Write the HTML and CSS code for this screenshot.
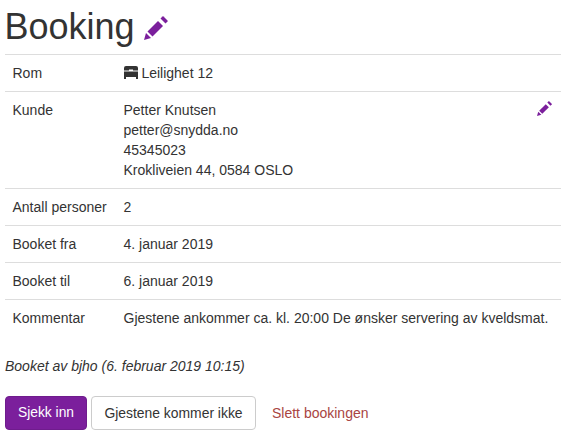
FILE: index.html
```html
<!DOCTYPE html>
<html lang="no">
<head>
<meta charset="utf-8">
<title>Booking</title>
<link rel="stylesheet" href="styles.css">
</head>
<body>
<svg class="defs" width="0" height="0" aria-hidden="true">
  <symbol id="pencil" viewBox="0 0 24 24">
    <path d="M0 24 L2 17 L7 22 Z"/>
    <path d="M3.5 15.5 L14 5 L19 10 L8.5 20.5 Z"/>
    <path d="M16.5 2.5 L18.5 .5 Q19 0 19.5 .5 L23.5 4.5 Q24 5 23.5 5.5 L21.5 7.5 Z"/>
  </symbol>
  <symbol id="bed" viewBox="0 0 14 14">
    <path d="M2 0 H12 Q14 0 14 2 V4.5 H9 V3.5 H5 V4.5 H0 V2 Q0 0 2 0 Z"/>
    <path d="M0 5.5 H14 V11 H0 Z"/>
    <path d="M0 11 H2 V13 H0 Z M12 11 H14 V13 H12 Z"/>
  </symbol>
</svg>
<h1 class="title">Booking <svg class="icon-title"><use href="#pencil"/></svg></h1>
<table class="details">
  <tbody>
    <tr><th>Rom</th><td><svg class="icon-bed"><use href="#bed"/></svg> Leilighet 12</td></tr>
    <tr>
      <th>Kunde</th>
      <td>
        <div class="customer">
          <div>Petter Knutsen<br>petter@snydda.no<br>45345023<br>Krokliveien 44, 0584 OSLO</div>
          <svg class="icon-edit"><use href="#pencil"/></svg>
        </div>
      </td>
    </tr>
    <tr><th>Antall personer</th><td>2</td></tr>
    <tr><th>Booket fra</th><td>4. januar 2019</td></tr>
    <tr><th>Booket til</th><td>6. januar 2019</td></tr>
    <tr><th>Kommentar</th><td>Gjestene ankommer ca. kl. 20:00 De ønsker servering av kveldsmat.</td></tr>
  </tbody>
</table>
<p class="meta">Booket av bjho (6. februar 2019 10:15)</p>
<div class="actions">
  <button class="btn btn-primary" type="button">Sjekk inn</button>
  <button class="btn btn-default" type="button">Gjestene kommer ikke</button>
  <a class="link-danger" href="#">Slett bookingen</a>
</div>
</body>
</html>
```
FILE: styles.css
```css
* { box-sizing: border-box; }
html, body { margin: 0; background: #fff; }
body {
  padding: 0 13px 0 5px;
  font-family: "Liberation Sans", Arial, sans-serif;
  font-size: 14px;
  line-height: 20px;
  color: #333;
}
.defs { position: absolute; }
.title {
  margin: 7px 0 7px -0.5px;
  font-size: 36px;
  font-weight: 400;
  line-height: 40px;
}
.icon-title { width: 24px; height: 24px; fill: #7b1f9c; vertical-align: -1px; margin-left: -0.5px; }
.details { width: 100%; border-collapse: collapse; }
.details th, .details td {
  padding: 8px 8px 8px 7.5px;
  text-align: left;
  vertical-align: top;
  font-weight: 400;
  border-top: 1px solid #ddd;
}
.details th { width: 111px; }
.customer { display: flex; justify-content: space-between; }
.icon-edit { width: 15px; height: 15px; fill: #7b1f9c; margin: 1px 1px 0 0; }
.icon-bed { width: 14px; height: 14px; fill: #333; vertical-align: -2px; }
.meta { margin: 20px 0 20px; font-style: italic; }
.actions { display: flex; align-items: center; gap: 4px; }
.btn {
  height: 34px;
  padding: 6px 12px;
  font-family: inherit;
  font-size: 13.8px;
  line-height: 20px;
  border: 1px solid transparent;
  border-radius: 4px;
}
.btn-primary { background: #7b1f9c; border-color: #6f1c8d; color: #fff; }
.btn-default { width: 165px; padding: 6px 0; font-size: 13.9px; background: #fff; border-color: #ccc; color: #333; }
.link-danger { padding: 6px 12px; color: #a94442; text-decoration: none; }
```
